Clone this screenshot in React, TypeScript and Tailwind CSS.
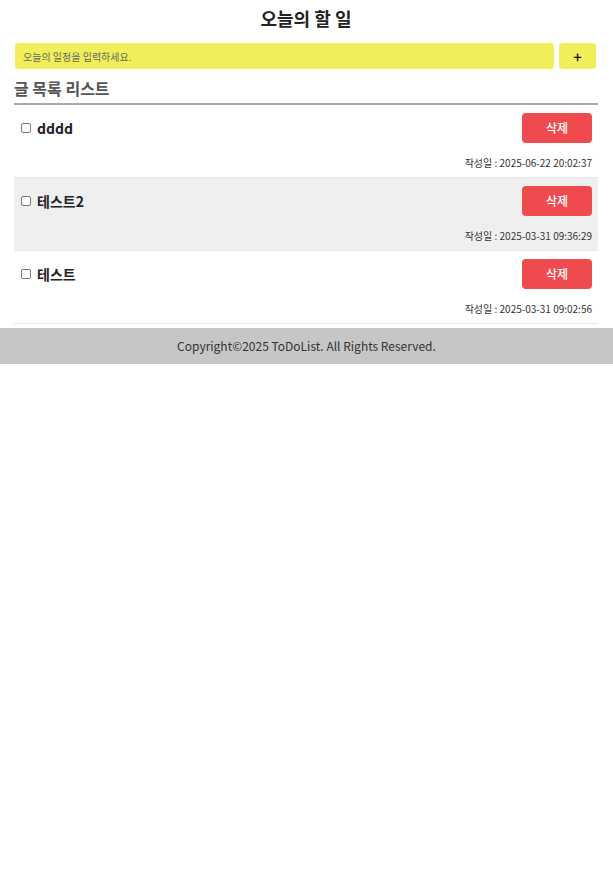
import React, { useState } from 'react';

type Todo = { id: number; title: string; date: string; done: boolean };

const initialTodos: Todo[] = [
  { id: 3, title: 'dddd', date: '2025-06-22 20:02:37', done: false },
  { id: 2, title: '테스트2', date: '2025-03-31 09:36:29', done: false },
  { id: 1, title: '테스트', date: '2025-03-31 09:02:56', done: false },
];

const App: React.FC = () => {
  const [todos, setTodos] = useState<Todo[]>(initialTodos);
  const [text, setText] = useState<string>('');

  const toggle = (id: number): void => {
    setTodos(todos.map((t) => (t.id === id ? { ...t, done: !t.done } : t)));
  };

  return (
    <div className="min-h-screen bg-white text-[#222] font-['Noto_Sans_CJK_KR','Noto_Sans',sans-serif]">
      <div className="px-[14px] pr-[15px]">
        <h1 className="h-[37px] flex items-center justify-center text-[18px] font-bold text-[#222]">
          오늘의 할 일
        </h1>
        <div className="flex gap-[5px] mt-[6px] pl-[1px] pr-[2px]">
          <input
            value={text}
            onChange={(e) => setText(e.target.value)}
            placeholder="오늘의 일정을 입력하세요."
            className="flex-1 h-[26px] rounded-[4px] bg-[#f0ef5a] px-[8px] text-[10px] text-[#333] placeholder:text-[#666] outline-none"
          />
          <button className="w-[37px] h-[26px] rounded-[4px] bg-[#f0ef5a] text-[15px] font-medium text-[#111] leading-none">
            +
          </button>
        </div>
        <h2 className="mt-[8px] h-[21px] flex items-center text-[16px] font-bold text-[#555]">
          글 목록 리스트
        </h2>
        <div className="mt-[5px] h-[2px] bg-[#aaaaaa]" />
        <ul>
          {todos.map((t, i) => (
            <li
              key={t.id}
              className={`px-[6px] pt-[8px] pb-[6px] border-b border-[#e6e6e6] ${i === 1 ? 'bg-[#efefef]' : 'bg-white'}`}
            >
              <div className="h-[30px] flex items-center justify-between">
                <label className="flex items-center gap-[6px] cursor-pointer">
                  <span
                    onClick={() => toggle(t.id)}
                    className="ml-[1px] w-[10px] h-[10px] rounded-[2px] border border-[#777] bg-white flex items-center justify-center text-[8px] leading-none"
                  >
                    {t.done ? '✓' : ''}
                  </span>
                  <span className="text-[14px] font-bold text-[#222]">{t.title}</span>
                </label>
                <button className="w-[70px] h-[30px] rounded-[4px] bg-[#ef4b4f] text-white text-[12px] font-medium">
                  삭제
                </button>
              </div>
              <div className="mt-[12px] h-[16px] leading-[16px] text-right text-[10px] text-[#333]">
                작성일 : {t.date}
              </div>
            </li>
          ))}
        </ul>
      </div>
      <footer className="mt-[4px] h-[36px] flex items-center justify-center bg-[#c6c6c6] text-[12px] text-[#333]">
        Copyright©2025 ToDoList. All Rights Reserved.
      </footer>
    </div>
  );
};

export default App;
